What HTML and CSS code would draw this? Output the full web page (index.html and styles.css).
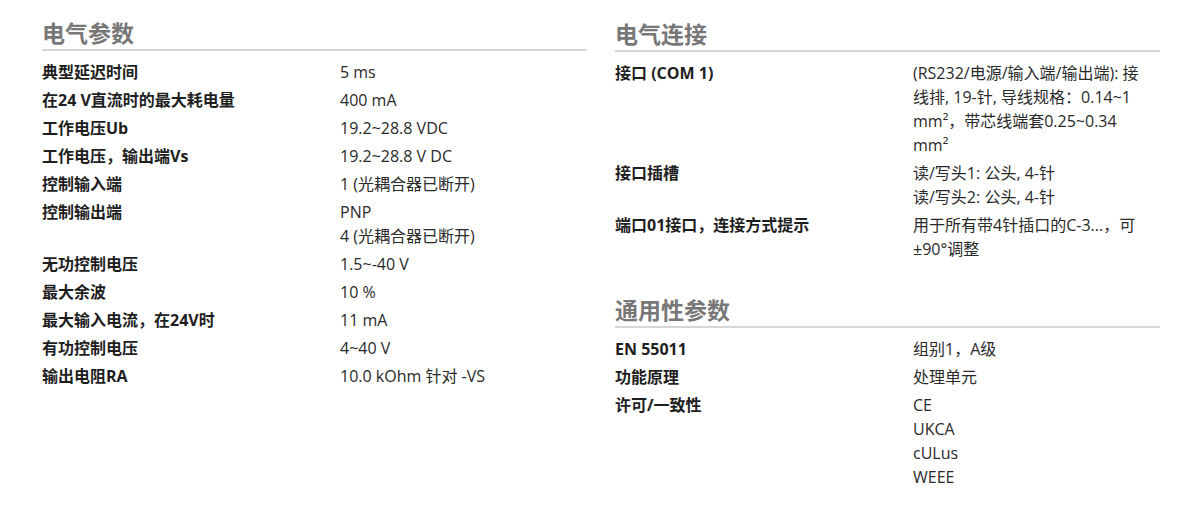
FILE: index.html
```html
<!DOCTYPE html>
<html lang="zh-CN">
<head>
<meta charset="utf-8">
<title>技术参数</title>
<link rel="stylesheet" href="styles.css">
</head>
<body>
<div class="page">
  <div class="col">
    <section class="sec">
      <h2 class="sec-title">电气参数</h2>
      <dl class="specs">
        <div class="row"><dt>典型延迟时间</dt><dd>5 ms</dd></div>
        <div class="row"><dt>在24 V直流时的最大耗电量</dt><dd>400 mA</dd></div>
        <div class="row"><dt>工作电压Ub</dt><dd>19.2~28.8 VDC</dd></div>
        <div class="row"><dt>工作电压，输出端Vs</dt><dd>19.2~28.8 V DC</dd></div>
        <div class="row"><dt>控制输入端</dt><dd>1 (光耦合器已断开)</dd></div>
        <div class="row"><dt>控制输出端</dt><dd><div>PNP</div><div>4 (光耦合器已断开)</div></dd></div>
        <div class="row"><dt>无功控制电压</dt><dd>1.5~-40 V</dd></div>
        <div class="row"><dt>最大余波</dt><dd>10 %</dd></div>
        <div class="row"><dt>最大输入电流，在24V时</dt><dd>11 mA</dd></div>
        <div class="row"><dt>有功控制电压</dt><dd>4~40 V</dd></div>
        <div class="row"><dt>输出电阻RA</dt><dd>10.0 kOhm 针对 -VS</dd></div>
      </dl>
    </section>
  </div>
  <div class="col col-right">
    <section class="sec">
      <h2 class="sec-title">电气连接</h2>
      <dl class="specs">
        <div class="row"><dt>接口 (COM 1)</dt><dd>(RS232/电源/输入端/输出端): 接线排, 19-针, 导线规格：0.14~1 mm²，带芯线端套0.25~0.34 mm²</dd></div>
        <div class="row"><dt>接口插槽</dt><dd><div>读/写头1: 公头, 4-针</div><div>读/写头2: 公头, 4-针</div></dd></div>
        <div class="row"><dt>端口01接口，连接方式提示</dt><dd>用于所有带4针插口的C-3...，可±90°调整</dd></div>
      </dl>
    </section>
    <section class="sec sec-next">
      <h2 class="sec-title">通用性参数</h2>
      <dl class="specs">
        <div class="row"><dt>EN 55011</dt><dd>组别1，A级</dd></div>
        <div class="row"><dt>功能原理</dt><dd>处理单元</dd></div>
        <div class="row"><dt>许可/一致性</dt><dd><div>CE</div><div>UKCA</div><div>cULus</div><div>WEEE</div></dd></div>
      </dl>
    </section>
  </div>
</div>
</body>
</html>
```

FILE: styles.css
```css
html, body {
  margin: 0;
  padding: 0;
  background: #ffffff;
}

body {
  font-family: "Open Sans", "Noto Sans CJK SC", sans-serif;
  font-size: 16px;
  line-height: 24px;
  color: #222222;
}

.page {
  display: grid;
  grid-template-columns: 545px 545px;
  column-gap: 28px;
  padding: 18px 40px 0 42px;
}

.col-right {
  padding-top: 1px;
}

.sec-title {
  margin: 0;
  font-size: 23px;
  line-height: 30px;
  font-weight: 700;
  color: #777777;
  padding-bottom: 1px;
  border-bottom: 2px solid #d6d6d6;
}

.sec-next {
  margin-top: 34px;
}

.specs {
  margin: 9px 0 0 0;
  display: flex;
  flex-direction: column;
  gap: 4px;
}

.row {
  display: grid;
  grid-template-columns: 298px 1fr;
}

.row dt {
  font-weight: 700;
  color: #1e1e1e;
}

.row dd {
  margin: 0;
  color: #2a2a2a;
  max-width: 240px;
}
```
